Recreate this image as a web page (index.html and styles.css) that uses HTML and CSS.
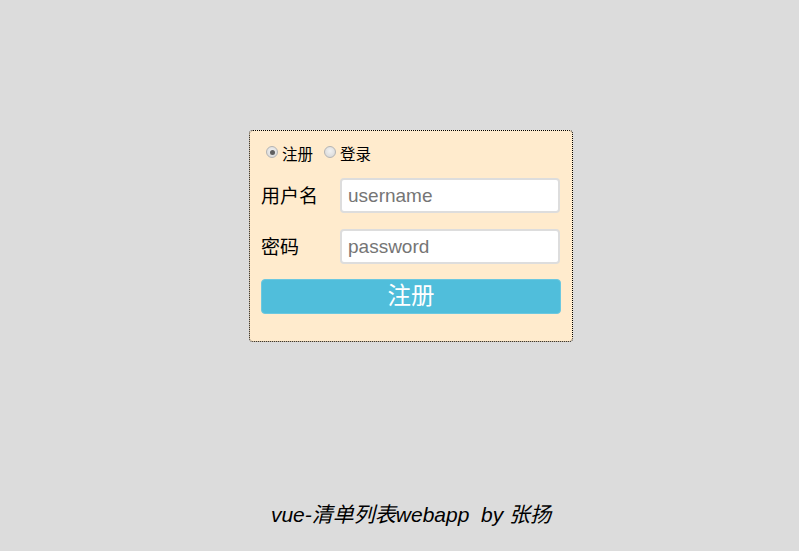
FILE: index.html
```html
<!DOCTYPE html>
<html lang="zh">
<head>
<meta charset="utf-8">
<title>vue-清单列表webapp</title>
<link rel="stylesheet" href="styles.css">
</head>
<body>
<div class="page">
  <div class="stage">
    <form class="card">
      <div class="modes">
        <label class="mode"><input type="radio" name="mode" checked><span>注册</span></label>
        <label class="mode"><input type="radio" name="mode"><span>登录</span></label>
      </div>
      <div class="field">
        <span class="field-label">用户名</span>
        <input class="field-input" type="text" placeholder="username">
      </div>
      <div class="field">
        <span class="field-label">密码</span>
        <input class="field-input" type="password" placeholder="password">
      </div>
      <button class="submit" type="button">注册</button>
    </form>
  </div>
  <footer class="footer">vue-清单列表webapp&nbsp; by 张扬</footer>
</div>
</body>
</html>
```
FILE: styles.css
```css
html, body {
  margin: 0;
  padding: 0;
  height: 100%;
}
body {
  background: #dcdcdc;
  font-family: "Liberation Sans", "Noto Sans CJK SC", sans-serif;
  color: #000;
}
.page {
  height: 551px;
  display: flex;
  flex-direction: column;
  align-items: center;
  padding-left: 23px;
  box-sizing: border-box;
}
.stage {
  padding-top: 130px;
  flex: 1;
}
.card {
  width: 324px;
  box-sizing: border-box;
  border: 1px dotted #000;
  border-radius: 4px;
  background: #ffebcd;
  padding: 12px 12px 27px 11px;
  margin: 0;
}
.modes {
  display: flex;
  align-items: center;
  padding-left: 4px;
  height: 20px;
  margin-bottom: 15px;
  font-size: 15.5px;
}
.mode {
  display: flex;
  align-items: center;
  margin-right: 10px;
}
.mode input {
  appearance: none;
  -webkit-appearance: none;
  margin: 0 4px 0 1px;
  width: 12px;
  height: 12px;
  box-sizing: border-box;
  border: 1px solid #b4b4b4;
  border-radius: 50%;
  background: radial-gradient(circle at 50% 40%, #f2f2f2, #d4d4d4);
  position: relative;
  top: -1px;
}
.mode input:checked::after {
  content: "";
  position: absolute;
  left: 2.5px;
  top: 2.5px;
  width: 5px;
  height: 5px;
  border-radius: 50%;
  background: #5f5f5f;
}
.field {
  display: flex;
  align-items: center;
  height: 35px;
  margin-bottom: 16px;
}
.field-label {
  width: 80px;
  font-size: 19px;
  margin-top: -3px;
}
.field-input {
  width: 220px;
  height: 35px;
  box-sizing: border-box;
  border: 2px solid #ddd;
  border-radius: 4px;
  padding: 0 6px;
  font-family: "Liberation Sans", "Noto Sans CJK SC", sans-serif;
  font-size: 19px;
  background: #fff;
  outline: none;
}
.field-input::placeholder {
  color: #757575;
}
.submit {
  display: block;
  width: 300px;
  height: 35px;
  margin-top: -1px;
  border: 1px solid #6cc8e0;
  border-radius: 4px;
  background: #50bedb;
  color: #fff;
  font-family: "Liberation Sans", "Noto Sans CJK SC", sans-serif;
  font-size: 23.5px;
  padding: 0;
  line-height: 33px;
}
.footer {
  font-style: italic;
  font-size: 21px;
  padding-bottom: 23px;
}
```
